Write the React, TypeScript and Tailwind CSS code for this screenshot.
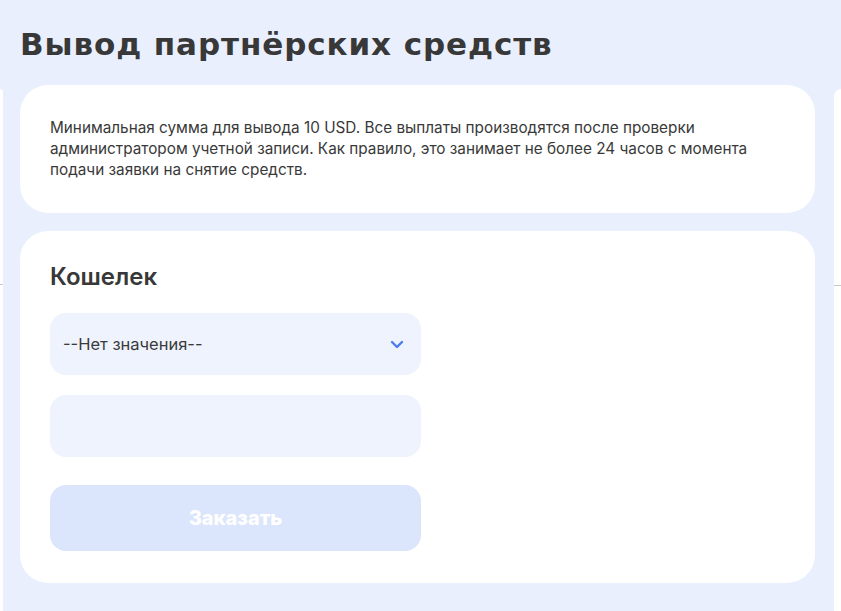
import React from "react";

function Chevron() {
  return (
    <svg width="14" height="9" viewBox="0 0 14 9" fill="none" aria-hidden>
      <path
        d="M2 2l5 5 5-5"
        stroke="#4a7cf0"
        strokeWidth="2.4"
        strokeLinecap="round"
        strokeLinejoin="round"
      />
    </svg>
  );
}

export default function App() {
  return (
    <div className="w-[841px] h-[611px] overflow-hidden bg-[#e9effd] flex flex-col font-['Inter',sans-serif] text-[#393939]">
      {/* Title */}
      <h1 className="h-[89px] shrink-0 pl-5 pt-[24px] font-['DejaVu_Sans',sans-serif] text-[31px] font-bold leading-[40px] tracking-[0.9px] text-[#383838]">
        Вывод партнёрских средств
      </h1>

      <div className="flex flex-1 min-h-0">
        {/* Left neighbour panel peeking */}
        <div className="w-[3px] shrink-0 bg-white rounded-tr-[3px] flex flex-col">
          <div className="h-[195px]" />
          <div className="border-t border-[#c8c8c8]" />
        </div>

        {/* Main panel */}
        <div className="flex-1 flex flex-col gap-[18px] pl-[17px] pr-[19px] -mt-[4px]">
          <div className="bg-white rounded-[28px] h-[128px] px-[30px] pt-[32px]">
            <p className="text-[15.3px] leading-[21px] max-w-[740px]">
              Минимальная сумма для вывода 10 USD. Все выплаты производятся после проверки
              администратором учетной записи. Как правило, это занимает не более 24 часов с
              момента подачи заявки на снятие средств.
            </p>
          </div>

          <div className="bg-white rounded-[28px] h-[352px] px-[30px] pt-[31px]">
            <h2 className="text-[24px] leading-[30px] font-semibold text-[#383838]">Кошелек</h2>

            <div className="mt-[21px] w-[371px] flex flex-col">
              <button className="h-[62px] rounded-[16px] bg-[#eff3fd] flex items-center justify-between pl-[13px] pr-[17px] text-[16.5px] text-[#3a3a3a]">
                <span>--Нет значения--</span>
                <Chevron />
              </button>
              <input
                className="mt-[20px] h-[62px] rounded-[16px] bg-[#eff3fd] px-[13px] outline-none"
                aria-label="Кошелек"
              />
              <button className="mt-[28px] h-[66px] rounded-[16px] bg-[#dbe5fc] text-white text-[20px] font-extrabold">
                Заказать
              </button>
            </div>
          </div>
        </div>

        {/* Right neighbour panel peeking */}
        <div className="w-[7px] shrink-0 bg-white rounded-tl-[7px] flex flex-col">
          <div className="h-[196px]" />
          <div className="border-t border-[#c8c8c8]" />
        </div>
      </div>
    </div>
  );
}
